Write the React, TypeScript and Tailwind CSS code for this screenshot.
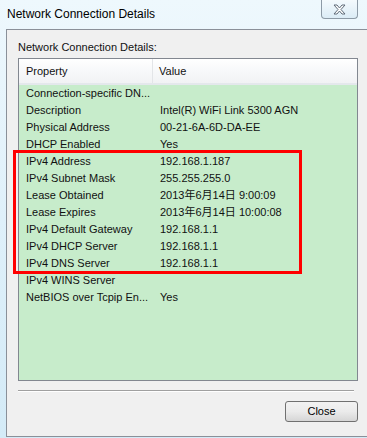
import React from "react";

const rows: [string, string][] = [
  ["Connection-specific DN...", ""],
  ["Description", "Intel(R) WiFi Link 5300 AGN"],
  ["Physical Address", "00-21-6A-6D-DA-EE"],
  ["DHCP Enabled", "Yes"],
  ["IPv4 Address", "192.168.1.187"],
  ["IPv4 Subnet Mask", "255.255.255.0"],
  ["Lease Obtained", "2013年6月14日 9:00:09"],
  ["Lease Expires", "2013年6月14日 10:00:08"],
  ["IPv4 Default Gateway", "192.168.1.1"],
  ["IPv4 DHCP Server", "192.168.1.1"],
  ["IPv4 DNS Server", "192.168.1.1"],
  ["IPv4 WINS Server", ""],
  ["NetBIOS over Tcpip En...", "Yes"],
];

const font = {
  fontFamily: '"Liberation Sans", "Noto Sans CJK SC", sans-serif',
};

export default function App() {
  return (
    <div
      className="relative w-[367px] h-[438px] overflow-hidden flex flex-col bg-gradient-to-b from-[#eef8fd] via-[#dff0fa] to-[#d4ebf7] text-[11px] text-[#111]"
      style={font}
    >
      {/* Title bar */}
      <div className="h-[29px] flex items-start relative">
        <span className="pl-[7px] pt-[7px] text-[12px] text-black leading-[15px]">
          Network Connection Details
        </span>
        <div className="absolute left-[321px] top-0 w-[37px] h-[19px] rounded-b-[4px] border border-t-0 border-[#8d9aa6] bg-gradient-to-b from-[#f4fafd] to-[#dcecf6] flex items-center justify-center">
          <svg width="13" height="11" viewBox="0 0 13 11">
            <path
              d="M1 1h3l2.5 3 2.5-3h3l-4 4.5 4 4.5h-3L6.5 7 4 10H1l4-4.5z"
              fill="#ffffff"
              stroke="#5f6b78"
              strokeWidth="1"
              strokeLinejoin="round"
            />
          </svg>
        </div>
      </div>

      {/* Client area */}
      <div className="flex-1 ml-[6px] mb-[1px] bg-[#f0f0f0] border-l border-t border-b border-[#8a9099] flex flex-col pl-[11px] pr-[9px]">
        <div className="mt-[10px] h-[15px] leading-[15px]">Network Connection Details:</div>

        <div className="mt-[3px] w-[340px] h-[323px] border border-[#828790] bg-[#c7eccb] flex flex-col">
          <div className="h-[26px] flex items-stretch bg-gradient-to-b from-[#ffffff] via-[#f7f8fa] to-[#f1f2f4] border-b-2 border-[#e4e8ec]">
            <div className="w-[134px] pl-[7px] flex items-center border-r border-[#e3e5e8]">
              Property
            </div>
            <div className="pl-[6px] flex items-center">Value</div>
          </div>
          <div className="flex flex-col">
            {rows.map(([k, v]) => (
              <div key={k} className="h-[17px] flex items-center whitespace-nowrap">
                <div className="w-[134px] pl-[7px]">{k}</div>
                <div className="pl-[7px]">{v}</div>
              </div>
            ))}
          </div>
        </div>

        <div className="mt-[9px] h-[2px] w-[336px] border-t border-[#a0a0a0] border-b border-b-white" />

        <div className="mt-[9px] flex justify-end">
          <button className="w-[73px] h-[21px] rounded-[3px] border border-[#707070] bg-gradient-to-b from-[#f2f2f2] via-[#ebebeb] to-[#d6d6d6] text-[11px] text-black leading-none">
            Close
          </button>
        </div>
      </div>

      {/* Red highlight */}
      <div className="absolute left-[13px] top-[150px] w-[289px] h-[124px] border-[3px] border-[#ff0000]" />
    </div>
  );
}
